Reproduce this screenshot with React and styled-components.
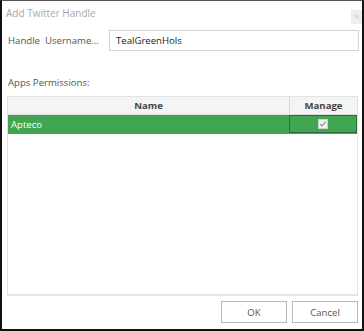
import styled, { createGlobalStyle } from "styled-components"

const GlobalStyle = createGlobalStyle`
    html, body {
        margin: 0;
        padding: 0;
        background: #fff;
    }
    body {
        font-family: "Open Sans", "Noto Sans", Arial, sans-serif;
        font-size: 9.6px;
        color: #444;
    }
    * {
        box-sizing: border-box;
    }
`

const Dialog = styled.div`
    width: 364px;
    height: 331px;
    display: flex;
    flex-direction: column;
    border: 2px solid #111;
    border-top: 1px solid #555;
    background: #fff;
`

const TitleBar = styled.div`
    height: 24px;
    display: flex;
    align-items: center;
    justify-content: space-between;
    padding: 0 0 0 4px;
`

const Title = styled.span`
    color: #a8a8a8;
    font-size: 10px;
`

const CloseButton = styled.div`
    width: 11px;
    height: 14px;
    margin-top: 7px;
    background: #ededed;
    color: #d0d0d0;
    font-size: 7px;
    display: flex;
    align-items: center;
    justify-content: center;
`

const FieldRow = styled.div`
    display: flex;
    align-items: center;
    padding: 5px 3px 0 6px;
`

const FieldLabel = styled.label`
    width: 101px;
    color: #555;
    white-space: nowrap;
`

const TextInput = styled.input`
    flex: 1;
    height: 21px;
    border: 1px solid #d4d4d4;
    padding: 0 6px;
    font-family: inherit;
    font-size: 9.6px;
    color: #222;
    outline: none;
`

const SectionLabel = styled.div`
    color: #555;
    padding: 25px 0 0 6px;
    height: 45px;
`

const Table = styled.div`
    flex: 1;
    margin: 0 4px 0 5px;
    border: 1px solid #e2e2e2;
    border-bottom: 2px solid #e6e6e6;
    display: flex;
    flex-direction: column;
`

const Row = styled.div`
    display: grid;
    grid-template-columns: 1fr 68px;
    height: ${p => (p.$header ? "18px" : "19px")};
    background: ${p => (p.$selected ? "#42a553" : p.$header ? "#f4f4f4" : "#fff")};
    border-bottom: 1px solid ${p => (p.$header ? "#dcdcdc" : "transparent")};
`

const Cell = styled.div`
    display: flex;
    align-items: center;
    justify-content: ${p => (p.$center ? "center" : "flex-start")};
    padding: 0 3px;
    font-weight: ${p => (p.$header ? 700 : 400)};
    color: ${p => (p.$header ? "#444" : p.$selected ? "#fff" : "#444")};
    border-left: ${p => (p.$divider ? "1px solid #d8d8d8" : "none")};
    outline: ${p => (p.$focus ? "1px solid #2b6d37" : "none")};
    outline-offset: -1px;
`

const CheckBox = styled.span`
    width: 10px;
    height: 10px;
    background: #f2f2f2;
    border: 1px solid #cfcfcf;
    display: flex;
    align-items: center;
    justify-content: center;
`

const Footer = styled.div`
    height: 33px;
    display: flex;
    justify-content: flex-end;
    align-items: center;
    gap: 5px;
    padding: 0 4px 1px 0;
`

const Button = styled.button`
    width: 66px;
    height: 22px;
    background: #fff;
    border: 1px solid #b8b8b8;
    font-family: inherit;
    font-size: 9.6px;
    color: #555;
`

export default function App() {
  return (
    <>
      <GlobalStyle />
      <Dialog>
        <TitleBar>
          <Title>Add Twitter Handle</Title>
          <CloseButton>✕</CloseButton>
        </TitleBar>
        <FieldRow>
          <FieldLabel>Handle&nbsp; Username...</FieldLabel>
          <TextInput defaultValue="TealGreenHols" />
        </FieldRow>
        <SectionLabel>Apps Permissions:</SectionLabel>
        <Table>
          <Row $header>
            <Cell $header $center>Name</Cell>
            <Cell $header $center $divider>Manage</Cell>
          </Row>
          <Row $selected>
            <Cell $selected>Apteco</Cell>
            <Cell $selected $center $focus>
              <CheckBox>
                <svg width="8" height="8" viewBox="0 0 8 8">
                  <path d="M1.2 4.2 L3 6 L6.8 1.6" fill="none" stroke="#8a8a8a" strokeWidth="1.1" />
                </svg>
              </CheckBox>
            </Cell>
          </Row>
        </Table>
        <Footer>
          <Button>OK</Button>
          <Button>Cancel</Button>
        </Footer>
      </Dialog>
    </>
  )
}
